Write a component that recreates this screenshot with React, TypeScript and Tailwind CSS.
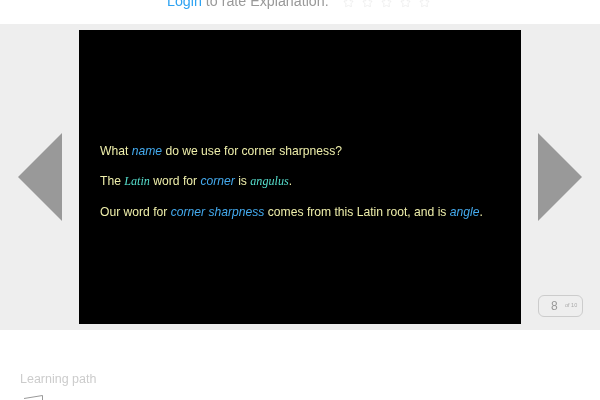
import { Star } from 'lucide-react';

function Arrow({ direction }: { direction: 'left' | 'right' }) {
  return (
    <svg width="44" height="88" viewBox="0 0 44 88" className="shrink-0">
      <polygon points={direction === 'left' ? '44,0 44,88 0,44' : '0,0 0,88 44,44'} fill="#999999" />
    </svg>
  );
}

export default function App() {
  return (
    <div className="w-[600px] h-[400px] overflow-hidden bg-white font-['Liberation_Sans',sans-serif]">
      <div className="h-6 overflow-hidden flex items-end pl-[167px] pb-[15px] text-[14.25px] leading-4 text-[#999999]">
        <span className="whitespace-nowrap will-change-transform">
          <a className="text-[#2ea3f2]">Login</a> to rate Explanation.
        </span>
        <span className="flex gap-[8px] ml-[14px] mb-[1px] text-[#dddddd]">
          {[0, 1, 2, 3, 4].map((i) => (
            <Star key={i} size={11} strokeWidth={1} />
          ))}
        </span>
      </div>

      <div className="h-[306px] bg-[#eeeeee] flex items-center pl-[18px] pr-[18px]">
        <Arrow direction="left" />
        <div className="w-[442px] h-[294px] mx-[17px] bg-black flex flex-col justify-center gap-[15px] pl-[21px] pt-[11px] text-[12.13px] leading-[15.5px] text-[#eeeeaa] shrink-0">
          <p className="will-change-transform">
            What <i className="text-[#44aaee]">name</i> do we use for corner sharpness?
          </p>
          <p className="will-change-transform -mt-px mb-px">
            The <i className="font-['Liberation_Serif',serif] text-[#55ddcc]">Latin</i> word for{' '}
            <i className="text-[#44aaee]">corner</i> is{' '}
            <i className="font-['Liberation_Serif',serif] text-[#55ddcc]">angulus</i>.
          </p>
          <p className="will-change-transform">
            Our word for <i className="text-[#44aaee]">corner sharpness</i> comes from this Latin root, and is{' '}
            <i className="text-[#44aaee]">angle</i>.
          </p>
        </div>
        <div className="relative self-stretch flex items-center">
          <Arrow direction="right" />
          <div className="absolute left-0 bottom-[13px] w-[45px] h-[22px] border border-[#cccccc] rounded-[6px] flex items-center pl-[12px] gap-[7px] text-[#999999]">
            <span className="text-[12px] leading-none will-change-transform">8</span>
            <span className="text-[5.5px] leading-none text-[#aaaaaa] whitespace-nowrap will-change-transform">of 10</span>
          </div>
        </div>
      </div>

      <div className="pt-[42px] pl-5">
        <div className="text-[12.5px] leading-[15px] text-[#cccccc] will-change-transform">Learning path</div>
        <svg width="24" height="12" viewBox="0 0 24 12" className="mt-[8px] ml-[3px]">
          <path d="M1 3.5 L19.5 0.5 V12" fill="none" stroke="#999999" strokeWidth="1" />
        </svg>
      </div>
    </div>
  );
}
